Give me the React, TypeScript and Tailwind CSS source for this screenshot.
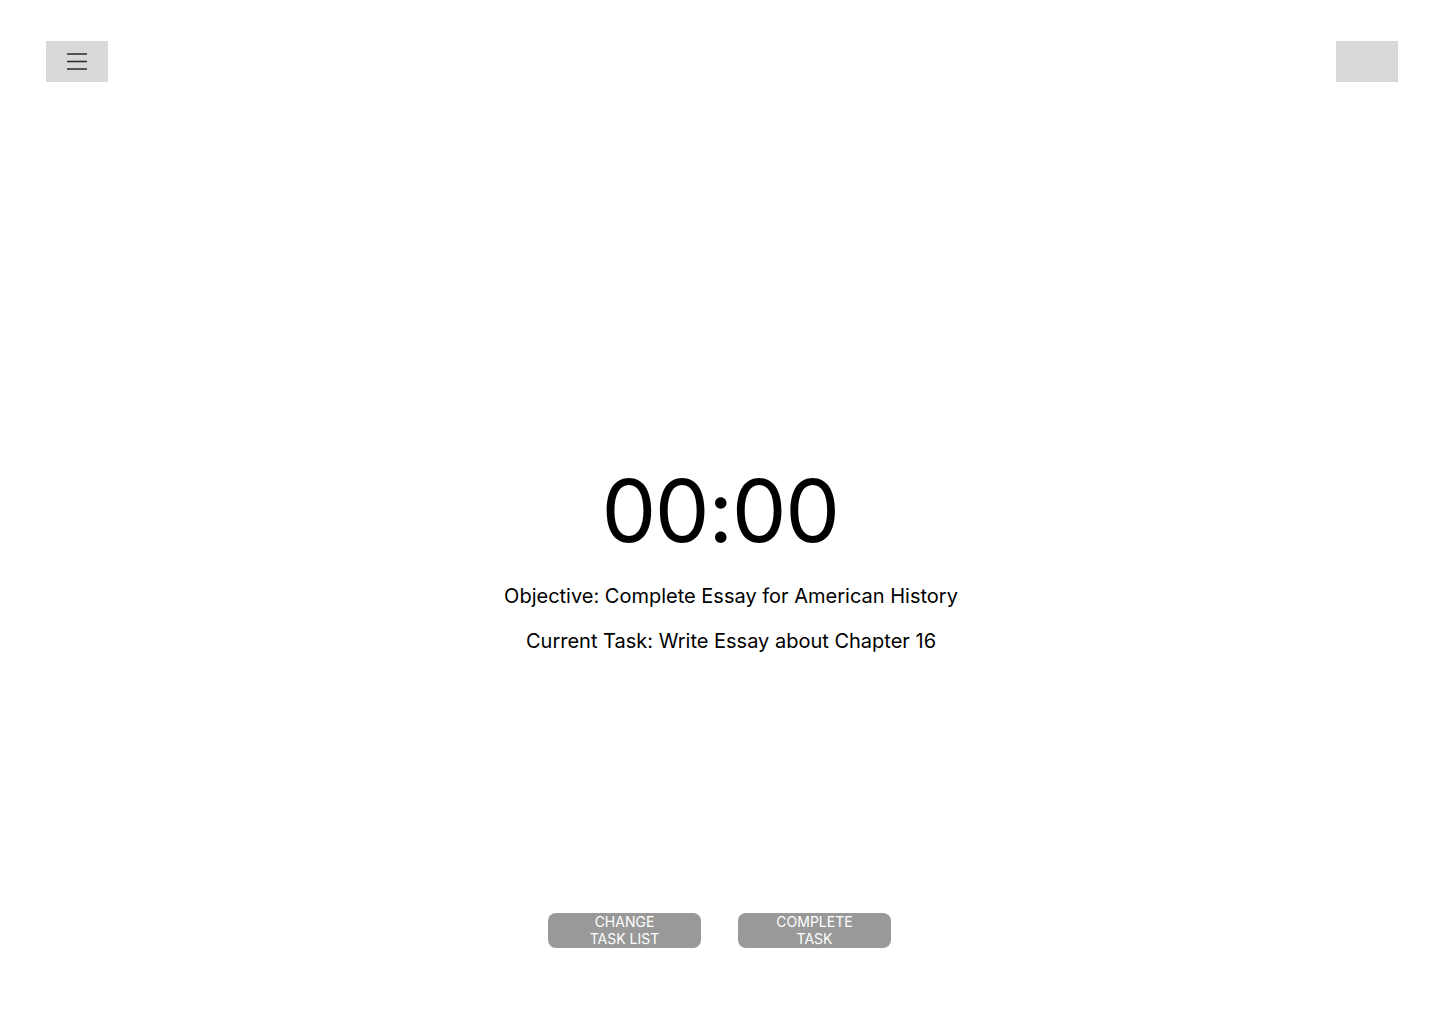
import React from "react";

const MenuIcon: React.FC = () => (
    <svg width="22" height="17" viewBox="0 0 22 17" fill="none">
        <path d="M1 1h20M1 8.5h20M1 16h20" stroke="#2a2a2a" strokeWidth="1.6" />
    </svg>
);

export default function App() {
    return (
        <div className="w-full h-[1024px] bg-white flex flex-col font-['Inter',sans-serif] text-black">
            {/* Top bar */}
            <div className="flex items-start justify-between pl-[46px] pr-[42px] pt-[41px]">
                <button className="w-[62px] h-[41px] bg-[#d9d9d9] flex items-center justify-center">
                    <MenuIcon />
                </button>
                <div className="w-[62px] h-[41px] bg-[#d9d9d9]" />
            </div>

            {/* Timer */}
            <div className="flex flex-col items-center mt-[385px]">
                <div className="text-[87px] leading-none tracking-[-1.5px]">00:00</div>
            </div>

            <div className="flex flex-col items-center gap-[17px] mt-[28px] pl-[22px]">
                <p className="text-[20px] leading-[28px]">Objective: Complete Essay for American History</p>
                <p className="text-[20px] leading-[28px]">Current Task: Write Essay about Chapter 16</p>
            </div>

            {/* Actions */}
            <div className="flex justify-center gap-[37px] mt-[258px] pr-[1px]">
                <button className="w-[153px] h-[35px] pb-[2px] rounded-[8px] bg-[#999999] text-white text-[14px] leading-[17px] uppercase flex flex-col items-center justify-center">
                    <span>Change</span>
                    <span>Task List</span>
                </button>
                <button className="w-[153px] h-[35px] pb-[2px] rounded-[8px] bg-[#999999] text-white text-[14px] leading-[17px] uppercase flex flex-col items-center justify-center">
                    <span>Complete</span>
                    <span>Task</span>
                </button>
            </div>
        </div>
    );
}
